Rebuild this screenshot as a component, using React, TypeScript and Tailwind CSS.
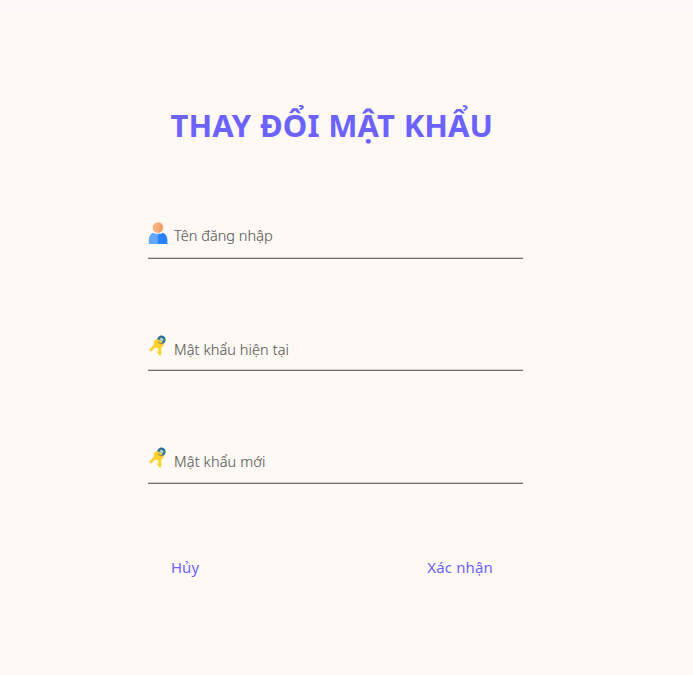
function UserIcon() {
  return (
    <svg width="20" height="22" viewBox="0 0 20 22" className="shrink-0" aria-hidden="true">
      <defs>
        <linearGradient id="skin" x1="0" x2="1">
          <stop offset="0.35" stopColor="#fbb27c" />
          <stop offset="0.65" stopColor="#f2a26b" />
        </linearGradient>
        <linearGradient id="shirt" x1="0" x2="1">
          <stop offset="0.44" stopColor="#66a8ff" />
          <stop offset="0.54" stopColor="#2682ff" />
        </linearGradient>
      </defs>
      <path d="M5 10.7C2.4 11.6.8 14.500.8 18v4h18.600v-4c0-3.500-1.800-6.400-4.400-7.300-2.800 1.600-7.200 1.600-10 0Z" fill="url(#shirt)" />
      <circle cx="10" cy="5.600" r="5.300" fill="url(#skin)" />
    </svg>
  );
}

function KeysIcon() {
  return (
    <svg width="20" height="22" viewBox="0 0 20 22" className="shrink-0" aria-hidden="true">
      <path d="M9 9 2.800 15" stroke="#ffcf2e" strokeWidth="2.800" strokeLinecap="round" />
      <path d="M6.500 6 10 4l5 3.500v3l-2.500 2-3.500.2L6 10Z" fill="#ffcf2e" stroke="#ffcf2e" strokeLinejoin="round" />
      <path d="M11.800 10v9" stroke="#fad324" strokeWidth="3" strokeLinecap="round" />
      <path d="M9.400 17.200h2" stroke="#fad324" strokeWidth="1.800" />
      <circle cx="13.500" cy="4.700" r="3.100" fill="#a9c8c4" stroke="#2d7190" strokeWidth="2.100" />
      <path d="m9.700 5.600 3.400 1.600" stroke="#f4cb31" strokeWidth="2.200" strokeLinecap="round" />
    </svg>
  );
}

export default function App() {
  return (
    <main className="h-[675px] w-[693px] overflow-hidden bg-[#fef9f5] pt-3 font-['Noto_Sans','Open_Sans',sans-serif] shadow-[inset_0_12px_0_#fefafa]">
      <h1 className="ml-[170.500px] mt-[91px] h-[44px] whitespace-nowrap text-[31px] leading-[44px] font-bold tracking-[0.05px] word-spacing-normal text-[#6c63ff] [word-spacing:0.7px]">
        THAY ĐỔI MẬT KHẨU
      </h1>
      <form className="ml-[148px] w-[375px]">
        <label className="mt-[75px] flex h-[37px] items-start border-b border-[#716d6b] shadow-[inset_0_-1px_0_#d2cecb]">
          <UserIcon />
          <span className="ml-1.5 mt-[3px] text-[14.500px] leading-5 font-[350] tracking-[0.02px] text-[#625e5c] [-webkit-text-stroke:0.15px_#625e5c]">Tên đăng nhập</span>
        </label>
        <label className="mt-[76px] flex h-[36px] items-start border-b border-[#716d6b] shadow-[inset_0_-1px_0_#d2cecb]">
          <KeysIcon />
          <span className="ml-1.5 mt-1 text-[14.500px] leading-5 font-[350] tracking-[0.08px] text-[#625e5c] [-webkit-text-stroke:0.15px_#625e5c]">Mật khẩu hiện tại</span>
        </label>
        <label className="mt-[76px] flex h-[37px] items-start border-b border-[#716d6b] shadow-[inset_0_-1px_0_#d2cecb]">
          <KeysIcon />
          <span className="ml-1.5 mt-1 text-[14.500px] leading-5 font-[350] tracking-[0.12px] text-[#625e5c] [-webkit-text-stroke:0.15px_#625e5c]">Mật khẩu mới</span>
        </label>
        <div className="mr-[30px] ml-[23px] mt-[73px] flex justify-between text-[15px] leading-5 text-[#6c63ff]">
          <button type="button">Hủy</button>
          <button type="button" className="tracking-[0.15px]">Xác nhận</button>
        </div>
      </form>
    </main>
  );
}
